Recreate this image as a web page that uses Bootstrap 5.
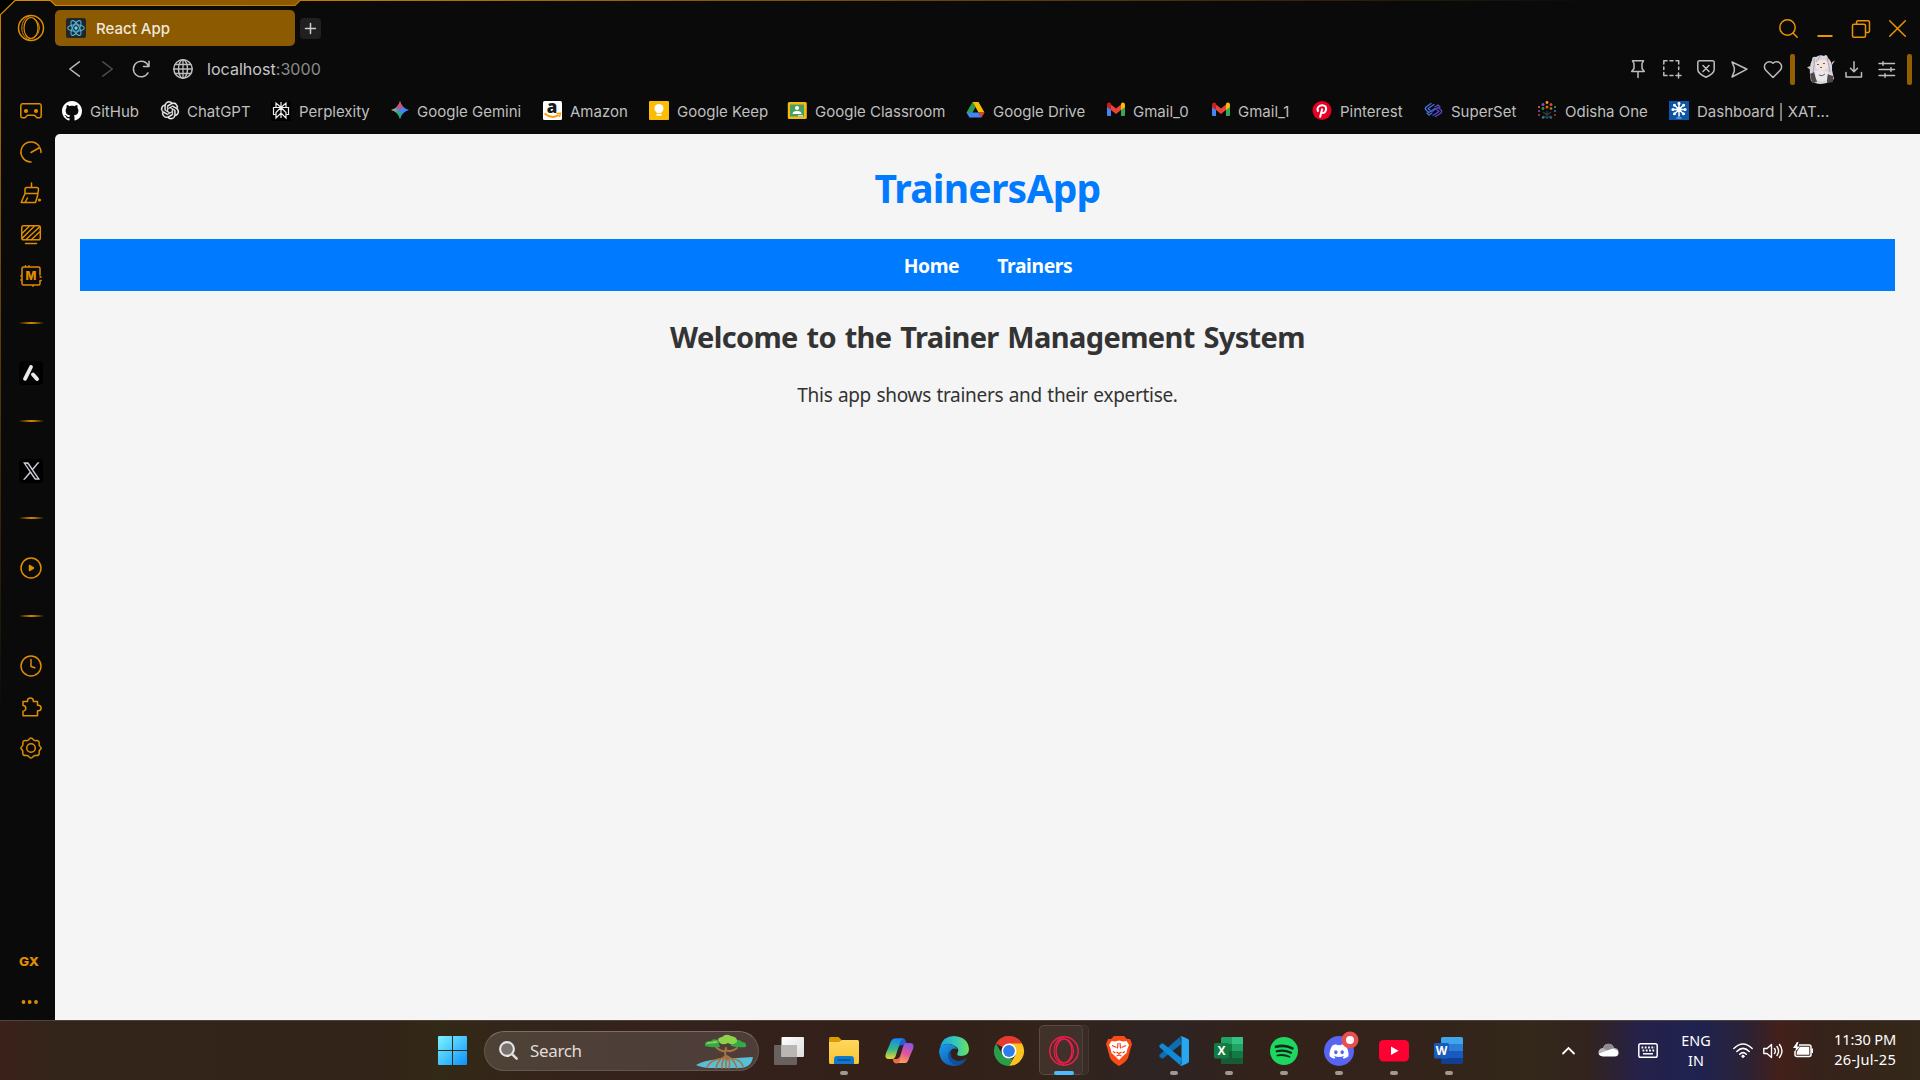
<!DOCTYPE html>
<html lang="en">
<head>
<meta charset="utf-8">
<meta name="viewport" content="width=device-width, initial-scale=1">
<title>React App</title>
<link href="https://cdn.jsdelivr.net/npm/bootstrap@5.3.0/dist/css/bootstrap.min.css" rel="stylesheet">
<style>
  :root { --gx: #e08d00; --gx-dim: #8c5a00; --ui: #bdbdbd; }
  body { width: 1920px; height: 1080px; background: #0a0a0a; color: var(--ui); font-family: Inter, sans-serif; font-size: 15px; line-height: 20px; }
  svg { display: block; flex: none; overflow: visible; }
  .ln { fill: none; stroke: currentColor; stroke-width: 1.5; stroke-linecap: round; stroke-linejoin: round; }
  .browser { height: 1020px; background: #0a0a0a; }
  .frame-line { top: 0; left: 0; pointer-events: none; }
  .side { width: 55px; padding-left: 7px; color: var(--gx); }
  .side-logo { height: 56px; margin-bottom: 34.5px; }
  .side-cell { height: 41.2px; }
  .side-app { height: 43.5px; padding-top: 2px; }
  .side-rule { height: 54px; }
  .side-rule span { width: 25px; height: 2px; background: linear-gradient(90deg, transparent, #a56a00 35%, #d08400 50%, #a56a00 65%, transparent); }
  .side-tile { width: 24px; height: 24px; border-radius: 4px; background: #000; }
  .side-end { height: 37px; padding-right: 3px; }
  .gx-word { font: 800 12px/12px Inter, sans-serif; transform: scaleX(1.12); }
  .tab-row { height: 46px; padding: 10px 4px 0 0; }
  .tab-active { width: 240px; height: 36px; background: var(--gx-dim); border-radius: 5px; padding-left: 11px; gap: 10px; color: #f0e8dc; font-weight: 500; }
  .tab-active span { padding-top: 1px; }
  .tab-new { width: 21px; height: 21px; margin-left: 5px; border-radius: 4px; background: #202020; color: #ccc; }
  .win-btn { width: 36.4px; color: #ea9400; padding-top: 1px; }
  .addr-row { height: 46px; padding-left: 3px; }
  .nav-btn { width: 33px; }
  .act-btn { width: 33.75px; }
  .url { font-size: 16.1px; margin-left: 14px; color: #c6c6c6; }
  .url span { color: #8b8b8b; }
  .amber-bar { width: 5px; height: 31px; border-radius: 2px; background: #945f00; }
  .avatar { margin-left: 10px; }
  .marks { height: 42px; padding: 0 0 4px 7px; display: grid; grid-template-columns: 99px 110px 120px 152px 106px 138px 179px 140px 105px 101px 112px 113px 132px 170px; white-space: nowrap; color: #bfbfbf; }
  .marks a { color: inherit; gap: 8px; text-decoration: none; }
  .marks a span { padding-top: 2px; }
  .page-view { background: #f5f5f5; border-top-left-radius: 5px; padding: 25px; color: #333; font-family: "Noto Sans", sans-serif; }
  .page-view h1 { font-size: 39px; letter-spacing: -.75px; line-height: 53px; font-weight: 700; color: #007bff; margin: 2px 0 25px; }
  .page-nav { height: 52px; background: #007bff; gap: 38px; font-weight: 700; font-size: 19.3px; letter-spacing: -.37px; padding: 2px 0 0 1px; }
  .page-nav a { color: #fff; text-decoration: none; }
  .page-view h2 { font-size: 29px; letter-spacing: -.63px; word-spacing: 1.8px; line-height: 40px; font-weight: 700; margin: 26px 0 25px; }
  .page-view p { font-size: 19px; letter-spacing: -.3px; word-spacing: .8px; line-height: 27px; margin: 0; }
  .taskbar { height: 60px; padding: 0 24px 0 429px; border-top: 1px solid #4d443b; color: #fff; font-family: "Noto Sans", sans-serif;
    background: linear-gradient(90deg, #3b2119 0, #33251a 60px, #322418 380px, #332917 440px, #34231a 560px, #34211c 740px, #332018 900px, #32231b 1060px, #2d2424 1160px, #33221a 1260px, #33231a 1420px, #332819 1530px, #32231f 1590px, #25214a 1640px, #1f2250 1700px, #2a2236 1745px, #44201a 1780px, #36221a 1815px, #332819 1920px); }
  .tb-start { width: 46px; }
  .tb-search { width: 275px; height: 40px; margin: 0 2.5px 0 9px; border-radius: 20px; padding-left: 14px; background: rgba(255,255,255,.13); border: 1px solid rgba(255,255,255,.12); border-top-color: rgba(255,255,255,.25); font-size: 17px; color: #e0dcd8; letter-spacing: -.35px; overflow: hidden; }
  .tb-cell { width: 55px; height: 59px; }
  .pip { left: 50%; bottom: 5px; width: 8px; height: 4px; margin-left: -4px; border-radius: 2px; background: #9f9894; }
  .pip-on { width: 20px; margin-left: -10px; background: #4cbcff; }
  .open-back { left: 2px; top: 4px; width: 50px; height: 50px; border-radius: 5px; background: rgba(255,255,255,.04); border: 1px solid rgba(255,255,255,.06); }
  .open-front { left: 2px; top: 4px; width: 44px; height: 50px; border-radius: 5px; background: rgba(255,255,255,.03); border: 1px solid rgba(255,255,255,.08); }
  .tray-wide { width: 40px; }
  .tray-slim { width: 30px; }
  .tray-lang { width: 56px; margin-right: 4px; font-size: 14.4px; }
  .tray-time { width: 78px; font-size: 14.6px; letter-spacing: -.15px; padding-bottom: 3px; }
  .tray-time span { letter-spacing: .25px; }
</style>
<script src="https://cdn.jsdelivr.net/npm/bootstrap@5.3.0/dist/js/bootstrap.bundle.min.js"></script>
</head>
<body class="overflow-hidden">

<div class="browser d-flex position-relative">
  <svg class="frame-line position-absolute" width="1920" height="720" viewBox="0 0 1920 720">
    <defs>
      <linearGradient id="fadeX" gradientUnits="userSpaceOnUse" x1="0" y1="0" x2="1600" y2="0"><stop offset="0" stop-color="#d98900"/><stop offset=".22" stop-color="#c07900"/><stop offset="1" stop-color="#c07900" stop-opacity="0"/></linearGradient>
      <linearGradient id="fadeY" gradientUnits="userSpaceOnUse" x1="0" y1="15" x2="0" y2="720"><stop offset="0" stop-color="#c98000"/><stop offset=".3" stop-color="#7a4e00"/><stop offset="1" stop-color="#7a4e00" stop-opacity="0"/></linearGradient>
    </defs>
    <path d="M0 0H15L0 15Z" fill="#000"/>
    <path d="M50 0L55 5H295L300 0Z" fill="#8c5a00"/>
    <path d="M0 15L15 .5H50.500L55.500 5.500H295L300 .5H1600" fill="none" stroke="url(#fadeX)" stroke-width="1.2"/>
    <path d="M.5 14.500V720" fill="none" stroke="url(#fadeY)"/>
  </svg>

  <aside class="side d-flex flex-column align-items-stretch">
    <div class="side-logo d-flex align-items-center justify-content-center">
      <svg class="ln" width="28" height="28" viewBox="0 0 28 28"><circle cx="14" cy="14" r="12.500"/><ellipse cx="14" cy="14" rx="7" ry="10.500" stroke-width="1.200"/><path d="M14 1.500C9 2.500 4.800 7.500 4.800 14S9 25.500 14 26.500M17 4.500c3.500 2 5.300 5.500 5.300 9.500s-1.800 7.500-5.300 9.500" stroke-width="1"/></svg>
    </div>
    <div class="side-cell d-flex align-items-center justify-content-center">
      <svg class="ln" width="22" height="16" viewBox="0 0 22 16"><path d="M2.500.8H19.500A1.800 1.800 0 0 1 21.200 2.500V13A1.800 1.800 0 0 1 19.500 14.800H17L14.500 12.300H7.500L5 14.800H2.500A1.800 1.800 0 0 1 .8 13V2.500A1.800 1.800 0 0 1 2.500.8Z"/><circle cx="6" cy="8" r="1.300" fill="currentColor"/><circle cx="16" cy="8" r="1.300" fill="currentColor"/></svg>
    </div>
    <div class="side-cell d-flex align-items-center justify-content-center">
      <svg class="ln" width="22" height="22" viewBox="0 0 22 22"><path d="M11 21A10 10 0 1 1 19 5M21 11.500a10 10 0 0 0-1.200-5L11 11.500"/></svg>
    </div>
    <div class="side-cell d-flex align-items-center justify-content-center">
      <svg class="ln" width="22" height="22" viewBox="0 0 22 22"><path d="M11.500 1v4.500M5 11V7.500a2 2 0 0 1 2-2h9.500a2 2 0 0 1 2 2L17.500 14 15.500 20.500H1.200L5 11.500H18M5 20.500 7.500 16"/><circle cx="19.500" cy="18" r="1.600" fill="currentColor" stroke="none"/></svg>
    </div>
    <div class="side-cell d-flex align-items-center justify-content-center">
      <svg class="ln" width="20" height="20" viewBox="0 0 20 20"><rect x=".8" y=".8" width="18.500" height="14" rx="1.800"/><path d="M1.500 8 8 1.500M1.500 13 13 1.500M5 14.500 18.500 2M10.500 14.500 18.500 7M4.500 18.500H15.500"/></svg>
    </div>
    <div class="side-cell d-flex align-items-center justify-content-center">
      <svg class="ln" width="22" height="22" viewBox="0 0 22 22"><path d="M2 6V3.500A1.500 1.500 0 0 1 3.500 2H18.500A1.500 1.500 0 0 1 20 3.500V10M20 16v2.500a1.500 1.500 0 0 1-1.500 1.500H3.500A1.500 1.500 0 0 1 2 18.500V6M5.500 1.800V.8M9 1.800V.8M.8 11H2M.8 15H2M20 12h1.200M20 15.500h1.200M13 20v1.200"/><text x="11" y="15.200" text-anchor="middle" font-family="Inter, sans-serif" font-weight="800" font-size="11.500" fill="currentColor" stroke="none">M</text></svg>
    </div>
    <div class="side-rule d-flex align-items-center justify-content-center"><span></span></div>
    <div class="side-app d-flex align-items-center justify-content-center">
      <div class="side-tile d-flex align-items-center justify-content-center"><svg width="18" height="18" viewBox="0 0 18 18" stroke="#e8e8e8" stroke-linecap="round"><path d="M9 3 3 14.800" stroke-width="3.800"/><path d="M11 10.500 15 15" stroke-width="4"/></svg></div>
    </div>
    <div class="side-rule d-flex align-items-center justify-content-center"><span></span></div>
    <div class="side-app d-flex align-items-center justify-content-center">
      <div class="side-tile d-flex align-items-center justify-content-center"><svg width="17" height="18" viewBox="0 0 24 24"><path fill="#dcdce4" stroke="#dcdce4" stroke-width=".5" d="M14.200 10.200 22.700 0h-2l-7.400 8.800L7.400 0H.6l9 13.300L.6 24h2l7.900-9.300L16.800 24h6.800zM11.400 13.500l-.9-1.300L3.300 1.600h3.200l5.900 8.600.9 1.300 7.600 11h-3.200z"/></svg></div>
    </div>
    <div class="side-rule d-flex align-items-center justify-content-center"><span></span></div>
    <div class="side-app d-flex align-items-center justify-content-center">
      <svg class="ln" width="22" height="22" viewBox="0 0 22 22"><circle cx="11" cy="11" r="10"/><path d="M9.500 8.500v5l4-2.500z" fill="currentColor"/></svg>
    </div>
    <div class="side-rule d-flex align-items-center justify-content-center"><span></span></div>
    <div class="side-app d-flex align-items-center justify-content-center">
      <svg class="ln" width="22" height="22" viewBox="0 0 22 22"><circle cx="11" cy="11" r="10"/><path d="M11 4.500V11.500L14.800 12.800"/></svg>
    </div>
    <div class="side-cell d-flex align-items-center justify-content-center">
      <svg class="ln" width="22" height="20" viewBox="0 0 22 20"><path d="M3 4.500H7.500V3.800a2.900 2.900 0 0 1 5.800 0V4.500H17.500V8.200h.8a2.700 2.700 0 0 1 0 5.600H17.500V18.800H3V14.200A2.800 2.800 0 0 0 5.800 11.300 2.800 2.800 0 0 0 3 8.500Z"/></svg>
    </div>
    <div class="side-cell d-flex align-items-center justify-content-center">
      <svg class="ln" width="22" height="22" viewBox="0 0 22 22"><circle cx="11" cy="11" r="4.300"/><path d="M8.800 2.500Q11-.4 13.200 2.500 14.300 3.800 16 3.600 19.700 3.400 19.100 7 18.800 8.300 20.300 9.800 22 11.300 20.300 12.400 18.800 13.800 19.200 15.500 19.600 18.700 16 18.500 14.300 18.300 13.200 19.600 11 22.400 8.800 19.600 7.700 18.300 6 18.500 2.400 18.700 2.800 15.500 3.200 13.800 1.700 12.400 0 11 1.700 9.800 3.200 8.300 2.900 7 2.300 3.400 6 3.600 7.700 3.800 8.800 2.500Z"/></svg>
    </div>
    <div class="side-cell d-flex align-items-center justify-content-center mt-auto pe-1"><span class="gx-word">GX</span></div>
    <div class="side-end d-flex align-items-center justify-content-center">
      <svg width="18" height="4" viewBox="0 0 18 4" fill="currentColor"><circle cx="2.500" cy="2" r="1.900"/><circle cx="8.700" cy="2" r="1.900"/><circle cx="15" cy="2" r="1.900"/></svg>
    </div>
  </aside>

  <div class="flex-grow-1 d-flex flex-column">
    <div class="tab-row d-flex align-items-center">
      <div class="tab-active d-flex align-items-center">
        <svg width="20" height="20" viewBox="0 0 20 20"><rect width="20" height="20" rx="2.500" fill="#22252b"/><g fill="none" stroke="#4fb6d3" stroke-width="1.100"><ellipse cx="10" cy="10" rx="8.300" ry="3.300"/><ellipse cx="10" cy="10" rx="8.300" ry="3.300" transform="rotate(60 10 10)"/><ellipse cx="10" cy="10" rx="8.300" ry="3.300" transform="rotate(120 10 10)"/></g><circle cx="10" cy="10" r="1.700" fill="#61dafb"/></svg>
        <span>React App</span>
      </div>
      <div class="tab-new d-flex align-items-center justify-content-center"><svg class="ln" width="11" height="11" viewBox="0 0 11 11"><path d="M5.500.5v10M.5 5.500h10"/></svg></div>
      <div class="ms-auto d-flex align-items-center">
        <div class="win-btn d-flex justify-content-center"><svg class="ln" width="19" height="19" viewBox="0 0 19 19"><circle cx="8.500" cy="8.500" r="7.700"/><path d="m14 14 4.200 4.200"/></svg></div>
        <div class="win-btn d-flex justify-content-center"><svg class="ln" width="16" height="19" viewBox="0 0 16 19"><path d="M.5 17h15" stroke-width="2" stroke-linecap="butt"/></svg></div>
        <div class="win-btn d-flex justify-content-center"><svg class="ln" width="18" height="18" viewBox="0 0 18 18"><rect x=".5" y="4.200" width="13" height="13" rx="1.500"/><path d="M4.500 4V2A1.500 1.500 0 0 1 6 .7H16A1.500 1.500 0 0 1 17.500 2.200V11A1.500 1.500 0 0 1 16 12.500H14"/></svg></div>
        <div class="win-btn d-flex justify-content-center"><svg class="ln" width="17" height="17" viewBox="0 0 17 17"><path d="M.7.700l15.600 15.600M16.300.700.7 16.300"/></svg></div>
      </div>
    </div>

    <div class="addr-row d-flex align-items-center">
      <div class="nav-btn d-flex justify-content-center"><svg class="ln" width="11" height="16" viewBox="0 0 11 16"><path d="M10.300.8.800 8l9.500 7.200"/></svg></div>
      <div class="nav-btn d-flex justify-content-center"><svg class="ln" width="11" height="16" viewBox="0 0 11 16" opacity=".38"><path d="M.8.800 10.300 8 .8 15.200"/></svg></div>
      <div class="nav-btn d-flex justify-content-center"><svg class="ln" width="18" height="18" viewBox="0 0 18 18"><path d="M17 1.200V6.500H11.500M16.500 6.200A7.800 7.800 0 1 0 16 12.800"/></svg></div>
      <svg class="ln ms-3" width="20" height="20" viewBox="0 0 20 20"><circle cx="10" cy="10" r="9.200"/><ellipse cx="10" cy="10" rx="4.500" ry="9.200"/><path d="M10 .8v18.400M.8 10h18.400M2.200 5.500h15.600M2.200 14.500h15.600" stroke-width="1.300"/></svg>
      <div class="url">localhost<span>:3000</span></div>
      <div class="ms-auto d-flex align-items-center">
        <div class="act-btn d-flex justify-content-center"><svg class="ln" width="14" height="18" viewBox="0 0 14 18"><path d="M1.500.8h11L11 3.500v5l2.300 3H.7l2.300-3v-5zM7 12v5.500"/></svg></div>
        <div class="act-btn d-flex justify-content-center"><svg class="ln" width="18" height="18" viewBox="0 0 18 18"><path d="M.8 4V.8H4M7 .8h3M13 .8h2.700V4M.8 7v2.500M.8 12.500v3H4M7 15.500h3M15.700 7v2.500M15.500 13v5M13 15.500h5"/></svg></div>
        <div class="act-btn d-flex justify-content-center"><svg class="ln" width="18" height="18" viewBox="0 0 18 18"><path d="M2.500.8h13a1.700 1.700 0 0 1 1.700 1.700V9.500C17.200 13 13 15.500 9 17.300 5 15.500.8 13 .8 9.500V2.500A1.700 1.700 0 0 1 2.500.8ZM6 5.500l6 6M12 5.500l-6 6"/></svg></div>
        <div class="act-btn d-flex justify-content-center"><svg class="ln" width="17" height="17" viewBox="0 0 17 17"><path d="M1 1l15 7.200L1 16l2.300-5.800V6.800Z"/></svg></div>
        <div class="act-btn d-flex justify-content-center"><svg class="ln" width="18" height="17" viewBox="0 0 18 17"><path d="M9 16.500 1.800 9.300A4.900 4.900 0 0 1 9 2.300a4.900 4.900 0 0 1 7.200 7Z"/></svg></div>
        <span class="amber-bar"></span>
        <svg class="avatar" width="32" height="30" viewBox="-2 0 32 30"><path d="M3 12 0 13.500 4 16Z M25 8l3-1.500L25 11Z" fill="#dcb9a4"/><path d="M4 27Q1 14 5 6 5 2 9 3 13 0 17 2 20-1 21 4 26 8 25 16L27 25Q18 32 8 29Z" fill="#d9d5df"/><path d="M8 9Q14 3 21 8V14Q15 19 9 14Z" fill="#f3e4dd"/><path d="M3 20 5 29 10 28 7 18ZM20 20 26 22 26 28 20 29Z" fill="#51474b"/><path d="M8 17Q14 15 21 18L20 26Q14 29 9 25Z" fill="#ebe8ec"/><path d="M10 10.500h2M16 9.500h2M13 13.500h2M12 21q3 2 6-1" stroke="#6b5a68" fill="none"/><path d="M7 4Q8 10 6 18M20 4Q22 11 23 18M13 2Q11 6 9 8" stroke="#a99fb1" fill="none"/></svg>
        <div class="nav-btn d-flex justify-content-center"><svg class="ln" width="18" height="17" viewBox="0 0 18 17"><path d="M9 .8V10.500M5.500 7.300 9 10.800l3.500-3.500M1 11.500V16H16.500V11.500"/></svg></div>
        <div class="nav-btn d-flex justify-content-center"><svg class="ln" width="18" height="17" viewBox="0 0 18 17"><path d="M1 2.500h15.500M1 8.500h15.500M1 14.500h15.500M5 .7v3.600M13 6.700v3.600M7 12.700v3.600"/></svg></div>
        <span class="amber-bar ms-1 me-2"></span>
      </div>
    </div>

    <nav class="marks align-items-center">
      <a class="d-flex align-items-center" href="#"><svg width="20" height="20" viewBox="0 0 16 16"><path fill="#fff" d="M8 0C3.580 0 0 3.580 0 8c0 3.540 2.290 6.530 5.470 7.590.4.070.55-.17.55-.38 0-.19-.01-.82-.01-1.490-2.010.37-2.530-.49-2.690-.94-.09-.23-.48-.94-.82-1.130-.28-.15-.68-.52-.01-.53.63-.01 1.080.58 1.230.82.72 1.210 1.870.87 2.330.66.07-.52.28-.87.51-1.070-1.780-.2-3.640-.89-3.640-3.950 0-.87.31-1.590.82-2.150-.08-.2-.36-1.020.08-2.120 0 0 .67-.21 2.200.82.64-.18 1.320-.27 2-.27.68 0 1.360.09 2 .27 1.530-1.040 2.200-.82 2.200-.82.44 1.100.16 1.920.08 2.120.51.56.82 1.270.82 2.150 0 3.070-1.870 3.750-3.650 3.950.29.25.54.73.54 1.480 0 1.070-.01 1.930-.01 2.200 0 .21.15.46.55.38A8.012 8.012 0 0 0 16 8c0-4.420-3.580-8-8-8z"/></svg><span>GitHub</span></a>
      <a class="d-flex align-items-center" href="#"><svg width="18" height="20" viewBox="0 0 24 26"><path fill="#f2f2f2" stroke="#f2f2f2" stroke-width=".4" d="M22.2819 9.8211a5.9847 5.9847 0 0 0-.5157-4.9108 6.0462 6.0462 0 0 0-6.5098-2.9A6.0651 6.0651 0 0 0 4.9807 4.1818a5.9847 5.9847 0 0 0-3.9977 2.9 6.0462 6.0462 0 0 0 .7427 7.0966 5.98 5.98 0 0 0 .511 4.9107 6.051 6.051 0 0 0 6.5146 2.9001A5.9847 5.9847 0 0 0 13.2599 24a6.0557 6.0557 0 0 0 5.7718-4.2058 5.9894 5.9894 0 0 0 3.9977-2.9001 6.0557 6.0557 0 0 0-.7475-7.0729zm-9.022 12.6081a4.4755 4.4755 0 0 1-2.8764-1.0408l.1419-.0804 4.7783-2.7582a.7948.7948 0 0 0 .3927-.6813v-6.7369l2.02 1.1686a.071.071 0 0 1 .038.0615v5.5826a4.504 4.504 0 0 1-4.4945 4.4944zm-9.6607-4.1254a4.4708 4.4708 0 0 1-.5346-3.0137l.142.0852 4.783 2.7582a.7712.7712 0 0 0 .7806 0l5.8428-3.3685v2.3324a.0804.0804 0 0 1-.0332.0615L9.74 19.9502a4.4992 4.4992 0 0 1-6.1408-1.6464zM2.3408 7.8956a4.485 4.485 0 0 1 2.3655-1.9728V11.6a.7664.7664 0 0 0 .3879.6765l5.8144 3.3543-2.0201 1.1685a.0757.0757 0 0 1-.071 0l-4.8303-2.7865A4.504 4.504 0 0 1 2.3408 7.872zm16.5963 3.8558L13.1038 8.364 15.1192 7.2a.0757.0757 0 0 1 .071 0l4.8303 2.7913a4.4944 4.4944 0 0 1-.6765 8.1042v-5.6772a.79.79 0 0 0-.407-.667zm2.0107-3.0231l-.142-.0852-4.7735-2.7818a.7759.7759 0 0 0-.7854 0L9.409 9.2297V6.8974a.0662.0662 0 0 1 .0284-.0615l4.8303-2.7866a4.4992 4.4992 0 0 1 6.6802 4.66zM8.3065 12.863l-2.02-1.1638a.0804.0804 0 0 1-.038-.0567V6.0742a4.4992 4.4992 0 0 1 7.3757-3.4537l-.142.0805L8.704 5.459a.7948.7948 0 0 0-.3927.6813zm1.0976-2.3654l2.602-1.4998 2.6069 1.4998v2.9994l-2.5974 1.4997-2.6067-1.4997Z"/></svg><span>ChatGPT</span></a>
      <a class="d-flex align-items-center" href="#"><svg width="20" height="20" viewBox="0 0 20 20"><path fill="#000" d="M0 0h20v20H0z"/><path fill="none" stroke="#ececec" stroke-width="1.200" d="M10 1v16M10 6.500 5 2v4.500h10V2L10 6.500M10 6.500 5 11.500v5.500l5-5 5 5v-5.500L10 6.500M5 13.500H2.500v-7H5M15 13.500h2.500v-7H15"/></svg><span>Perplexity</span></a>
      <a class="d-flex align-items-center" href="#"><svg width="18" height="20" viewBox="0 0 18 20"><defs><linearGradient id="gemA" x1="0" y1=".5" x2="1" y2=".5"><stop offset="0" stop-color="#f6c60c"/><stop offset=".35" stop-color="#4b8ee0"/><stop offset="1" stop-color="#3b86ff"/></linearGradient></defs><path d="M9 0Q11 7 18 9 11 11 9 18 7 11 0 9 7 7 9 0Z" fill="url(#gemA)"/><path d="M9 0Q10 4.500 12 6.500L9 9 5.500 6.800Q8 4.500 9 0Z" fill="#e9475c"/><path d="M9 18Q8 13.500 5.500 11.200L9 9 11 12.500Q9.500 15 9 18Z" fill="#27b25f"/><path d="M11 7 13 8 12 11 9.500 12.500 8 9Z" fill="#3b86ff"/></svg><span>Google Gemini</span></a>
      <a class="d-flex align-items-center" href="#"><svg width="19" height="20" viewBox="0 0 19 20"><rect width="19" height="19" rx="1.500" fill="#fff"/><text x="9" y="11.500" text-anchor="middle" font-family="Open Sans, sans-serif" font-weight="800" font-size="17" fill="#161a20">a</text><path d="M1.500 12.500Q9 18.500 16 14" fill="none" stroke="#ff9900" stroke-width="2"/><path d="M13.500 12.500l4-.3-1 4" fill="none" stroke="#ff9900" stroke-width="1.300"/></svg><span>Amazon</span></a>
      <a class="d-flex align-items-center" href="#"><svg width="20" height="20" viewBox="0 0 20 20"><rect width="20" height="19" rx="1" fill="#fbbc04"/><circle cx="10" cy="7.500" r="4.500" fill="#fff"/><path fill="#fff" d="M7.500 9h5v2.500h-5zM7.500 12.700h5v2h-5z"/></svg><span>Google Keep</span></a>
      <a class="d-flex align-items-center" href="#"><svg width="20" height="20" viewBox="0 0 20 20"><rect x=".8" y="1" width="19" height="17" rx="1.500" fill="#f4b913"/><path fill="#4a9e60" d="M3 3.500h14v12H3z"/><circle cx="10" cy="7" r="2" fill="#fff"/><path fill="#fff" d="M5.500 13q0-3 4.500-3t4.500 3z"/><path fill="#bfe0c6" d="M11 14h5v1.500h-5z"/></svg><span>Google Classroom</span></a>
      <a class="d-flex align-items-center" href="#"><svg width="19" height="20" viewBox="0 0 19 20"><path fill="#2b9f4c" d="M6.500 1 9.500 6 4 16.500.5 11.500Z"/><path fill="#fbbc04" d="M6.500 1h6L18.500 11.500h-6L9.500 6Z"/><path fill="#4285f4" d="M.5 11.500h12L15.500 16.500h-12Z"/><path fill="#ea4335" d="M12.500 11.500h6l-3 5Z"/></svg><span>Google Drive</span></a>
      <a class="d-flex align-items-center" href="#"><svg width="19" height="20" viewBox="0 0 19 20"><path fill="#4285f4" d="M1 4h4v11H2q-1 0-1-1z"/><path fill="#34a853" d="M15 4h4v10q0 1-1 1h-3z"/><path fill="#ea4335" d="M5 3.500l5 4 5-4V9l-5 4-5-4z"/><path fill="#c5221f" d="M1 3.500Q1.500 1 4 1.800L5 2.500V9L1 6z"/><path fill="#fbbc04" d="M19 3.500Q18.500 1 16 1.800L15 2.500V9L19 6z"/></svg><span>Gmail_0</span></a>
      <a class="d-flex align-items-center" href="#"><svg width="19" height="20" viewBox="0 0 19 20"><path fill="#4285f4" d="M1 4h4v11H2q-1 0-1-1z"/><path fill="#34a853" d="M15 4h4v10q0 1-1 1h-3z"/><path fill="#ea4335" d="M5 3.500l5 4 5-4V9l-5 4-5-4z"/><path fill="#c5221f" d="M1 3.500Q1.500 1 4 1.800L5 2.500V9L1 6z"/><path fill="#fbbc04" d="M19 3.500Q18.500 1 16 1.800L15 2.500V9L19 6z"/></svg><span>Gmail_1</span></a>
      <a class="d-flex align-items-center" href="#"><svg width="20" height="20" viewBox="0 0 20 20"><circle cx="10" cy="9.500" r="9.500" fill="#e60023"/><path d="M6.300 10.800Q4.300 7 7.500 5 11 3.300 13.500 5.500 15 8.500 13 11 10.800 13 9.500 11M10.300 7.500 8 16.500" fill="none" stroke="#fff" stroke-width="2"/></svg><span>Pinterest</span></a>
      <a class="d-flex align-items-center" href="#"><svg width="19" height="20" viewBox="0 0 19 20"><g fill="none" stroke-width="1.300" stroke-linecap="round" stroke-linejoin="round"><path stroke="#4273e0" d="M7 2.500 2 6Q.5 8 2.500 9.500L5 11.500 11 7.500M10 3.500 4 7.500 6 9M3 12 5 14 8 12"/><path stroke="#5b4bd0" d="M11.500 15.500 17 12Q18.500 10 16.500 8.500L14 6.500 8 10.500M9 14.500 15 10.500 13 9M16 6 14 4 11 6"/></g></svg><span>SuperSet</span></a>
      <a class="d-flex align-items-center" href="#"><svg width="20" height="20" viewBox="0 0 20 20"><path d="M10 18V10M10 14 6 11M10 14l4-3M10 17l-4-2M10 17l4-2" stroke="#343c3e" stroke-width="1.400"/><g><circle cx="10" cy="1.500" r="1.400" fill="#f5a800"/><circle cx="6" cy="3.500" r="1.500" fill="#8b4bc0"/><circle cx="14" cy="3.500" r="1.500" fill="#e8432d"/><circle cx="2" cy="6" r="1.100" fill="#ef6b22"/><circle cx="10" cy="6" r="1.500" fill="#ef5a22"/><circle cx="18" cy="6" r="1.100" fill="#2ba84a"/><circle cx="6" cy="7.500" r="1.400" fill="#15a04a"/><circle cx="14" cy="7.500" r="1.300" fill="#a8883c"/><circle cx="2" cy="10" r="1.100" fill="#944ba8"/><circle cx="18" cy="10" r="1.100" fill="#2878c8"/><circle cx="2" cy="14" r="1.100" fill="#c83c28"/><circle cx="18" cy="14" r="1.100" fill="#b83020"/><circle cx="6" cy="16.500" r="1.300" fill="#1b86b8"/><circle cx="14" cy="16.500" r="1.200" fill="#256e9c"/></g></svg><span>Odisha One</span></a>
      <a class="d-flex align-items-center" href="#"><svg width="20" height="20" viewBox="0 0 20 20"><path fill="#0c55a8" d="M0 0h20v19H0z"/><g stroke="#fff" stroke-width="1.500" stroke-linecap="round"><path d="M10 1.500v13.500M3.500 8.500h13M5.200 3.700l9.600 9.600M14.800 3.700l-9.600 9.600"/></g><g fill="#fff"><circle cx="10" cy="8.500" r="2.500"/><circle cx="10" cy="2.500" r="1.500"/><circle cx="4" cy="8.500" r="1.500"/><circle cx="16" cy="8.500" r="1.500"/><circle cx="5.500" cy="4.200" r="1.500"/><circle cx="14.500" cy="4.200" r="1.500"/><circle cx="5.500" cy="12.800" r="1.500"/><circle cx="14.500" cy="12.800" r="1.500"/></g><path d="M7.500 17h5" stroke="#a9c8e8"/></svg><span>Dashboard | XAT...</span></a>
    </nav>

    <main class="page-view flex-grow-1 text-center">
      <h1>TrainersApp</h1>
      <nav class="page-nav d-flex align-items-center justify-content-center"><a href="#">Home</a><a href="#">Trainers</a></nav>
      <h2>Welcome to the Trainer Management System</h2>
      <p>This app shows trainers and their expertise.</p>
    </main>
  </div>
</div>

<footer class="taskbar d-flex align-items-center">
  <div class="tb-start d-flex justify-content-center">
    <svg width="29" height="29" viewBox="0 0 29 29"><defs><linearGradient id="winG" gradientUnits="userSpaceOnUse" x1="0" y1="0" x2="29" y2="29"><stop stop-color="#7df3ff"/><stop offset=".5" stop-color="#45c4ff"/><stop offset="1" stop-color="#0a90fb"/></linearGradient></defs><path fill="url(#winG)" d="M1 0h13v14H0V1q0-1 1-1zM15 0h13q1 0 1 1v13H15zM0 15h14v14H1q-1 0-1-1zM15 15h14v13q0 1-1 1H15z"/></svg>
  </div>
  <div class="tb-search d-flex align-items-center">
    <svg width="19" height="19" viewBox="0 0 19 19"><circle cx="8" cy="8" r="6.900" fill="#7a716c" stroke="#e6e6e8" stroke-width="2.100"/><path d="m13 13 4.700 4.700" stroke="#dcdcde" stroke-width="2.500" stroke-linecap="round"/></svg>
    <span class="ms-2 ps-1">Search</span>
    <svg class="ms-auto me-1" width="58" height="34" viewBox="0 0 58 34"><path d="M0 31Q8 26 25 25L57 23 56 27Q53 34 44 34H12Q4 33 0 31Z" fill="#58bfd6"/><g fill="none" stroke="#a87343" stroke-linecap="round"><path d="M30 14Q28 20 31 26M20 13Q25 18 30 17M41 14Q35 19 30 16" stroke-width="2"/><path d="M30 22Q22 25 20 34M30 22Q25 28 26 34M31 22Q35 27 33 34M31 22Q38 25 41 34M28 24Q14 26 11 33M33 24Q45 25 47 32M30 24V34" stroke-width="1.600"/></g><g fill="#35a848"><path d="M9 12Q8 7 15 7 16 4 22 6L24 13Q16 14 9 12Z"/><path d="M35 8Q44 4 46 8 51 8 50 13 43 14 35 12Z"/></g><path fill="#8cd24a" d="M23 8Q20 4 26 3 30-1 35 2 42 3 41 8 36 12 32 9 26 12 23 8Z"/><path fill="#8bcf52" d="M10 10Q11 7 16 8 21 5 22 9Z"/></svg>
  </div>

  <div class="tb-cell d-flex align-items-center justify-content-center"><svg width="30" height="28" viewBox="0 0 30 28"><defs><linearGradient id="tv" x2="1" y2="1"><stop stop-color="#fff"/><stop offset="1" stop-color="#dcdcdc"/></linearGradient></defs><rect y="8" width="23" height="20" rx="1" fill="#67625f"/><rect x="7.500" width="22.500" height="20" rx="1" fill="url(#tv)"/><path fill="#b9b6b4" d="M7.500 8H23v12H7.500z"/></svg></div>
  <div class="tb-cell d-flex align-items-center justify-content-center position-relative"><svg width="30" height="27" viewBox="0 0 30 27"><defs><linearGradient id="fold" x2="0" y2="1"><stop stop-color="#ffd75e"/><stop offset="1" stop-color="#f8c331"/></linearGradient></defs><path fill="#dd9b00" d="M0 1.500Q0 0 1.500 0H9.500L13 3.500V8H0z"/><path fill="url(#fold)" d="M0 5H10L13 3H28.500Q30 3 30 4.500V25.500Q30 27 28.500 27H1.500Q0 27 0 25.500Z"/><path fill="#1179cc" d="M5 27V22Q5 19 8 19H22Q25 19 25 22V27z"/><path d="M9 23h12" stroke="#064f8d" stroke-width="1.300" stroke-linecap="round"/></svg><span class="pip position-absolute"></span></div>
  <div class="tb-cell d-flex align-items-center justify-content-center"><svg width="29" height="26" viewBox="0 0 29 26"><defs><linearGradient id="cpA" x2="0" y2="1"><stop stop-color="#168ce8"/><stop offset=".5" stop-color="#33b88a"/><stop offset="1" stop-color="#f0d331"/></linearGradient><linearGradient id="cpB" x1=".6" x2=".3" y2="1"><stop stop-color="#8c55e8"/><stop offset=".5" stop-color="#e05698"/><stop offset="1" stop-color="#ffa64f"/></linearGradient></defs><path fill="#1e63d6" d="M8 1Q9 0 11 0H17Q20 0 21 4L22 7H17Q14 7 12.500 12Z"/><path fill="url(#cpA)" d="M8 1Q6 2 4.500 7L1 15Q-1 21 4 21H7Q10 21 11 17L14 7Q15 2 18 1Z"/><path fill="url(#cpB)" d="M21 25Q23 24 24.500 19L28 11Q30 5 25 5H22Q19 5 18 9L15 19Q14 24 11 25Z"/><path fill="#ee6a4c" d="M8 21H12Q15 20 16 16L15 23Q14 26 11 25.500 8 25 8 21Z"/></svg></div>
  <div class="tb-cell d-flex align-items-center justify-content-center"><svg width="30" height="30" viewBox="0 0 30 30"><defs><linearGradient id="edA" x2="1"><stop stop-color="#1ca4e8"/><stop offset=".6" stop-color="#3bcbb0"/><stop offset="1" stop-color="#6be455"/></linearGradient><linearGradient id="edB" x2=".7" y2="1"><stop stop-color="#1c9be8"/><stop offset="1" stop-color="#0c58b4"/></linearGradient></defs><path fill="url(#edA)" d="M1 11Q4 0 15 0 29 1 30 13 30 20 22 20 17 20 18.500 17 21 13 16 10 8 5 1 11Z"/><path fill="url(#edB)" d="M0 15Q1 8 8 8 16 8 18 13 12 11 11 17 12 26 22 25.500L24 26Q20 30 15 30 1 29 0 15Z"/><path fill="#104f9e" d="M12 14Q9 24 19 25 24 25 28 22 25 28 19 29.500 10 28 9 20 9 16 12 14Z"/></svg></div>
  <div class="tb-cell d-flex align-items-center justify-content-center"><svg width="30" height="30" viewBox="0 0 30 30"><path fill="#e33b2e" d="M15 15 2 7.500A15 15 0 0 1 28 7.500z"/><path fill="#e33b2e" d="M2 7.500A15 15 0 0 1 28 7.500H15z"/><path fill="#fcc31e" d="M28 7.500A15 15 0 0 1 15 30L21.500 18.700 15 7.500z"/><path fill="#2a9d4a" d="M15 30A15 15 0 0 1 2 7.500L8.500 18.700 15 22.500 19 22.800z"/><circle cx="15" cy="15" r="7.500" fill="#fff"/><circle cx="15" cy="15" r="5.900" fill="#2f7de9"/></svg></div>
  <div class="tb-cell d-flex align-items-center justify-content-center position-relative"><span class="open-back position-absolute"></span><span class="open-front position-absolute"></span><svg class="position-relative" width="30" height="30" viewBox="0 0 30 30" fill="none" stroke="#ee1d4e" stroke-width="1.500"><circle cx="15" cy="15" r="14.200"/><ellipse cx="15" cy="15" rx="8" ry="12"/><path d="M15 1Q5 4 5 15T15 29M18.500 3.500Q24.500 8 24.500 15T18.500 26.500" stroke-width="1.100"/></svg><span class="pip pip-on position-absolute"></span></div>
  <div class="tb-cell d-flex align-items-center justify-content-center"><svg width="26" height="30" viewBox="0 0 26 30"><path fill="#fa4a16" d="M8 0H18L21 3 24 3 26 8 25 11 22 22Q20 26 13 30 6 26 4 22L1 11 0 8 2 3 5 3Z"/><path fill="#fff" d="M5.500 5 9 5.500 13 4.500 17 5.500 20.500 5 23 9 21.500 12.500 20.500 17 16.500 20.500 13 24 9.500 20.500 5.500 17 4.500 12.500 3 9Z"/><path fill="none" stroke="#f4421a" stroke-width="1.200" d="M6 9.500 10.500 11.500M20 9.500 15.500 11.500M12 7 11.500 12.500M14 7l.5 5.500M10.500 16 13 17.500 15.500 16M7 15.500l2.500 1.500M19 15.500 16.500 17M10.500 20l2.500-1 2.500 1"/></svg></div>
  <div class="tb-cell d-flex align-items-center justify-content-center position-relative"><svg width="30" height="30" viewBox="0 0 30 30"><path fill="#0b6fb5" d="M.8 18.500 21 .8 22.500 8 4 22.500Q3 23 2 22L.5 20.500Q0 19.500.8 18.500Z"/><path fill="#1089d6" d="M.8 11.500 21.500 29.500 22.500 22 4 7.500Q3 7 2 8L.5 9.500Q0 10.500.8 11.500Z"/><path fill="#27a7f0" d="M21 .7Q22 0 23.500.5L29 3Q30 3.500 30 5V25Q30 26.500 29 27L23.500 29.500Q22 30 21 29.300 22.500 29 22.500 27.500V2.500Q22.500 1 21 .7Z"/></svg><span class="pip position-absolute"></span></div>
  <div class="tb-cell d-flex align-items-center justify-content-center position-relative"><svg width="30" height="28" viewBox="0 0 30 28"><path fill="#21a366" d="M7 1.500Q7 0 8.500 0H18V7H7z"/><path fill="#33c481" d="M18 0H29V7H18z"/><path fill="#107c41" d="M7 7h11v7H7z"/><path fill="#21a366" d="M18 7h11v7H18z"/><path fill="#185c37" d="M7 14h22v13H7z"/><path fill="#107c41" d="M18 14h11v7H18z"/><rect y="6" width="15" height="15.500" rx="1.500" fill="#107c41"/><text x="7.500" y="18" text-anchor="middle" font-family="Open Sans, sans-serif" font-weight="700" font-size="12" fill="#fff">X</text></svg><span class="pip position-absolute"></span></div>
  <div class="tb-cell d-flex align-items-center justify-content-center position-relative"><svg width="28" height="28" viewBox="0 0 28 28"><circle cx="14" cy="14" r="14" fill="#1ed760"/><g fill="none" stroke="#102a1c" stroke-linecap="round"><path d="M6 9.800Q14.500 7.300 22.500 11.300" stroke-width="2.600"/><path d="M6.700 14.300Q14 12.300 21 15.700" stroke-width="2.200"/><path d="M7.300 18.500Q13.500 17 19.500 19.800" stroke-width="1.800"/></g></svg><span class="pip position-absolute"></span></div>
  <div class="tb-cell d-flex align-items-center justify-content-center position-relative"><svg width="30" height="30" viewBox="0 0 30 30"><circle cx="15" cy="15" r="15" fill="#5865f2"/><path transform="translate(5.500 6) scale(1.190)" fill="#fff" d="M13.545 2.907a13.227 13.227 0 0 0-3.257-1.011.05.05 0 0 0-.052.025c-.141.25-.297.577-.406.833a12.190 12.190 0 0 0-3.658 0 8.258 8.258 0 0 0-.412-.833.051.051 0 0 0-.052-.025c-1.125.194-2.220.534-3.257 1.011C.356 6.024-.213 9.047.066 12.032a13.276 13.276 0 0 0 4.016 2.057c.308-.42.582-.863.874-1.388a8.875 8.875 0 0 1-1.276-.665l.263-.285c2.670 1.200 5.505 1.200 8.092 0l.301.202a8.254 8.254 0 0 1-1.282.708c.24.465.515.909.876 1.428a13.235 13.235 0 0 0 4.019-2.057c.334-3.451-.559-6.449-2.404-9.125zM5.347 10.214c-.789 0-1.438-.724-1.438-1.612 0-.889.637-1.613 1.438-1.613.807 0 1.450.73 1.438 1.613 0 .888-.637 1.612-1.438 1.612zm5.316 0c-.788 0-1.438-.724-1.438-1.612 0-.889.637-1.613 1.438-1.613.807 0 1.451.73 1.438 1.613 0 .888-.631 1.612-1.438 1.612z"/><circle cx="26" cy="4" r="8.500" fill="#e8504f"/><circle cx="26" cy="4" r="4" fill="#fff"/></svg><span class="pip position-absolute"></span></div>
  <div class="tb-cell d-flex align-items-center justify-content-center position-relative"><svg width="30" height="22" viewBox="0 0 30 22"><rect width="30" height="21.500" rx="4.500" fill="#ff0033"/><path fill="#fff" d="M12 6.500v8.500l7.500-4.200z"/></svg><span class="pip position-absolute"></span></div>
  <div class="tb-cell d-flex align-items-center justify-content-center position-relative"><svg width="30" height="28" viewBox="0 0 30 28"><path fill="#41a5ee" d="M7 1.500Q7 0 8.500 0H27.500Q29 0 29 1.500V7H7z"/><path fill="#2b7cd3" d="M7 7h22v7H7z"/><path fill="#185abd" d="M7 14h22v7H7z"/><path fill="#103f91" d="M7 21h22v4.500Q29 27 27.500 27H8.500Q7 27 7 25.500z"/><rect y="6" width="15" height="15.500" rx="1.500" fill="#185abd"/><text x="7.500" y="18" text-anchor="middle" font-family="Open Sans, sans-serif" font-weight="700" font-size="12" fill="#fff">W</text></svg><span class="pip position-absolute"></span></div>

  <div class="ms-auto d-flex align-items-center">
    <div class="tray-wide d-flex justify-content-center"><svg width="13" height="8" viewBox="0 0 13 8"><path d="M1 6.500l5.500-5.500L12 6.500" fill="none" stroke="#fff" stroke-width="1.800" stroke-linecap="round"/></svg></div>
    <div class="tray-wide d-flex justify-content-center"><svg width="21" height="15" viewBox="0 0 21 15"><path fill="#b8b3b8" d="M3 13Q0 12 .5 8.500 1.500 5 5 5 7 0 12 1 15 1.500 16 5 20.500 5 20.500 9L12 11Z"/><path fill="#8f8a92" d="M5 5Q7 0 12 1 15 1.500 16 5L10 8Z"/><path fill="#fff" d="M4 13Q1 12.500 1 10.500L12 6.500Q15 5 18 7 21 8.500 20.500 11 19.500 13.500 17 13.500H4Z"/></svg></div>
    <div class="tray-wide d-flex justify-content-center"><svg width="20" height="15" viewBox="0 0 20 15"><rect x=".8" y=".8" width="18.400" height="13.400" rx="1.800" fill="none" stroke="#fff" stroke-width="1.500"/><path d="M3.500 4.500h13.500M4.500 7.500h12" stroke="#fff" stroke-width="1.800" stroke-dasharray="1.800 1.500"/><path d="M5 10.800h10" stroke="#fff" stroke-width="1.500"/></svg></div>
    <div class="tray-lang text-center">ENG<br>IN</div>
    <div class="tray-slim d-flex justify-content-center"><svg width="20" height="15" viewBox="0 0 20 15" fill="none" stroke="#fff" stroke-width="1.500" stroke-linecap="round"><path d="M.8 5.500Q10-3.500 19.200 5.500M3.800 8.500Q10 2.300 16.200 8.500M6.700 11.300Q10 8 13.300 11.300"/><circle cx="10" cy="13.300" r="1.200" fill="#fff" stroke-width=".8"/></svg></div>
    <div class="tray-slim d-flex justify-content-center"><svg width="20" height="16" viewBox="0 0 20 16" fill="none" stroke="#fff" stroke-width="1.400" stroke-linecap="round" stroke-linejoin="round"><path d="M.8 5.500H4L8.500 1.500V14.500L4 10.500H.8ZM11.500 5.500Q13.300 8 11.500 10.500M14 3.500Q17.200 8 14 12.500M16.500 1.500Q21.500 8 16.500 14.500"/></svg></div>
    <div class="tray-slim d-flex justify-content-center"><svg width="21" height="17" viewBox="0 0 21 17"><path d="M6 3H16A2 2 0 0 1 18 5V12.500A2 2 0 0 1 16 14.500H4A2 2 0 0 1 2 12.500V9" fill="none" stroke="#fff" stroke-width="1.500"/><path fill="#fff" d="M7 4.800H16.300V12.800H3.700V10ZM18.500 6.500H20V11H18.500ZM4 0 0 6H3L2 10 7 4.500H4L5.500 0Z"/></svg></div>
    <div class="tray-time text-end">11:30 PM<br><span>26-Jul-25</span></div>
  </div>
</footer>
</body>
</html>
